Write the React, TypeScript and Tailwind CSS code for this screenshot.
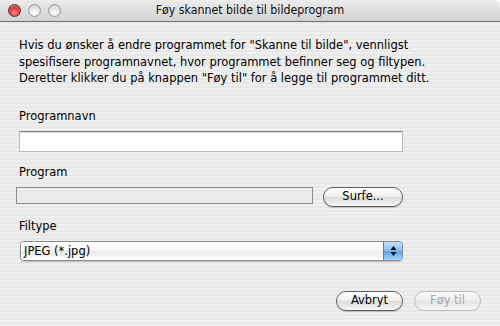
import React from "react";

const stripes =
  "bg-[repeating-linear-gradient(180deg,#efefef_0px,#efefef_2px,#e8e8e8_2px,#e8e8e8_4px)]";

function Light({ red }: { red?: boolean }) {
  return red ? (
    <div className="w-[13px] h-[13px] rounded-full border border-[#6b2323] bg-[radial-gradient(circle_at_50%_70%,#f08a8a_0%,#d83a3a_55%,#a01818_100%)] shadow-[inset_0_1px_1px_rgba(255,255,255,0.5)]" />
  ) : (
    <div className="w-[13px] h-[13px] rounded-full border border-[#9a9a9a] bg-[radial-gradient(circle_at_50%_70%,#ffffff_0%,#e2e2e2_55%,#c4c4c4_100%)]" />
  );
}

function PillButton({
  children,
  width,
  disabled,
}: {
  children: React.ReactNode;
  width: string;
  disabled?: boolean;
}) {
  return (
    <div
      className={
        width +
        " h-[20px] rounded-full flex items-center justify-center text-[12.75px] leading-none " +
        (disabled
          ? "border border-[#bdbdbd] text-[#a8a8a8] bg-[linear-gradient(180deg,#fbfbfb_0%,#ececec_50%,#e2e2e2_51%,#f6f6f6_100%)]"
          : "border border-[#5f5f5f] text-black bg-[linear-gradient(180deg,#ffffff_0%,#f0f0f0_45%,#dcdcdc_55%,#f8f8f8_100%)] shadow-[0_1px_1px_rgba(0,0,0,0.2)]")
      }
    >
      {children}
    </div>
  );
}

export default function App() {
  return (
    <div className="w-[500px] h-[326px] bg-white overflow-hidden font-['DejaVu_Sans_Condensed','DejaVu_Sans',sans-serif] text-black">
      <div className={"w-[500px] h-[326px] rounded-tr-[7px] overflow-hidden flex flex-col " + stripes}>
        {/* title bar */}
        <div className="relative h-[22px] shrink-0 flex items-center gap-[7px] pl-[8px] border-b border-[#6e6e6e] bg-[linear-gradient(180deg,#ececec_0%,#dedede_50%,#d2d2d2_100%)]">
          <Light red />
          <Light />
          <Light />
          <div className="absolute inset-0 flex items-center justify-center text-[12.25px] text-[#111]">
            Føy skannet bilde til bildeprogram
          </div>
        </div>

        {/* body */}
        <div className="flex flex-col pl-[19px] pr-[19px] pt-[15px] text-[12.75px]">
          <p className="leading-[16.5px]">
            Hvis du ønsker å endre programmet for "Skanne til bilde", vennligst
            <br />
            spesifisere programnavnet, hvor programmet befinner seg og filtypen.
            <br />
            Deretter klikker du på knappen "Føy til" for å legge til programmet ditt.
          </p>

          <div className="mt-[21px] leading-[16px]">Programnavn</div>
          <div className="mt-[7px] w-[384px] h-[21px] bg-white border border-[#b9b9b9] border-t-[#7d7d7d] shadow-[inset_0_1px_1px_rgba(0,0,0,0.12)]" />

          <div className="mt-[12px] leading-[16px]">Program</div>
          <div className="mt-[7px] flex items-start gap-[10px] -ml-[3px]">
            <div className="w-[297px] h-[17px] bg-[#ebebeb] border border-[#8d8d8d]" />
            <PillButton width="w-[80px]">Surfe...</PillButton>
          </div>

          <div className="mt-[11px] leading-[16px]">Filtype</div>
          <div className="mt-[7px] ml-[1px] w-[383px] h-[20px] rounded-[4px] border border-[#8a8a8a] flex overflow-hidden shadow-[0_1px_1px_rgba(0,0,0,0.2)]">
            <div className="flex-1 flex items-center pl-[3px] bg-[linear-gradient(180deg,#ffffff_0%,#f7f7f7_45%,#ebebeb_55%,#ffffff_100%)]">
              JPEG (*.jpg)
            </div>
            <div className="w-[19px] border-l border-[#5b7fb0] flex flex-col items-center justify-center bg-[linear-gradient(180deg,#c4e0fb_0%,#8fc0f4_45%,#5ea4ee_55%,#a5d4fb_100%)]">
              <svg width="7" height="12" viewBox="0 0 7 12">
                <path d="M3.5 1 L6.5 5 L0.5 5 Z" fill="#111" />
                <path d="M3.5 11 L6.5 7 L0.5 7 Z" fill="#111" />
              </svg>
            </div>
          </div>

          <div className="mt-[30px] flex justify-end gap-[11px]">
            <PillButton width="w-[67px]">Avbryt</PillButton>
            <PillButton width="w-[67px]" disabled>
              Føy til
            </PillButton>
          </div>
        </div>
      </div>
    </div>
  );
}
